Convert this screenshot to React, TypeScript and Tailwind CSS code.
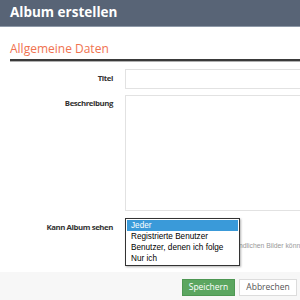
import React from "react";

export default function App() {
  const os = { fontFamily: '"Open Sans", "Noto Sans", sans-serif' };
  const ar = { fontFamily: '"Liberation Sans", Arial, sans-serif' };
  return (
    <div className="w-[300px] h-[300px] overflow-hidden bg-white relative" style={os}>
      <div className="h-[27px] bg-[#586476] border-b border-[#8e99a8] pl-[10px] flex items-center">
        <span className="text-white font-bold text-[13.5px] leading-none">Album erstellen</span>
      </div>
      <div className="pl-[10px]">
        <div className="pt-[13px] h-[32px] text-[#f07250] text-[12px] leading-[18px]">Allgemeine Daten</div>
        <div className="h-[2px] bg-[#3a3a3a]" />
        <div className="h-[1px] bg-[#b0b0b0]" />
        <div className="flex mt-[7px]">
          <div className="w-[103px] shrink-0 text-right text-[7.8px] font-bold tracking-[-0.4px] text-[#333] pt-[4px]">Titel</div>
          <div className="ml-[12px] shrink-0 w-[200px] h-[20px] border border-[#e2e2e2]" />
        </div>
        <div className="flex mt-[6px]">
          <div className="w-[103px] shrink-0 text-right text-[7.8px] font-bold tracking-[-0.4px] text-[#333] pt-[3px]">Beschreibung</div>
          <div className="ml-[12px] shrink-0 w-[200px] h-[116px] border border-[#e2e2e2]" />
        </div>
        <div className="flex mt-[7px] relative">
          <div className="w-[103px] shrink-0 text-right text-[7.8px] font-bold tracking-[-0.4px] text-[#333] pt-[4px]">Kann Album sehen</div>
          <div className="ml-[12px] relative h-[49px] w-[175px] shrink-0">
            <div className="absolute left-[114px] top-[23px] text-[6.8px] text-[#999] whitespace-nowrap" style={ar}>
              ndlichen Bilder könn
            </div>
            <div className="absolute left-0 top-0 w-[115px] border border-[#333] bg-white pt-[1px] pb-[1px] shadow-[1px_1px_2px_rgba(0,0,0,0.3)] text-[8.2px] leading-[11px] text-black" style={ar}>
              <div className="bg-[#3a9ad9] text-white pl-[4px] mx-[1px]">Jeder</div>
              <div className="pl-[5px]">Registrierte Benutzer</div>
              <div className="pl-[5px]">Benutzer, denen ich folge</div>
              <div className="pl-[5px]">Nur ich</div>
            </div>
          </div>
        </div>
      </div>
      <div className="absolute left-0 right-0 top-[272px] bottom-0 bg-[#f7f7f7] flex justify-end items-start pt-[7px] pr-[3px] gap-[4px]">
        <div className="w-[53px] h-[17px] bg-[#5ba660] border border-[#4e9753] text-white text-[8.5px] flex items-center justify-center">Speichern</div>
        <div className="w-[58px] h-[17px] bg-white border border-[#dcdcdc] text-[#555] text-[8.5px] flex items-center justify-center">Abbrechen</div>
      </div>
    </div>
  );
}
